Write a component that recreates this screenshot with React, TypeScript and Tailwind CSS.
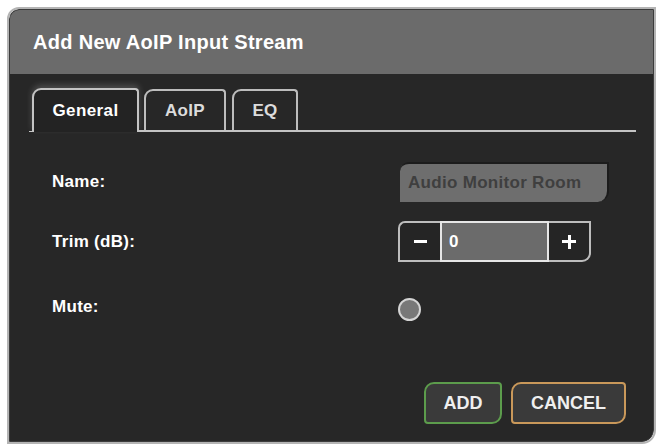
const font = { fontFamily: '"Liberation Sans", Arial, sans-serif' }

const Stepper = () => {
    return (
        <div className="flex h-[41px] w-[193px]">
            <button className="flex w-[42px] items-center justify-center rounded-tl-[7px] border-2 border-r-0 border-[#bdbdbd] bg-[#252525] text-white">
                <span className="block h-[3px] w-[13px] bg-white"></span>
            </button>
            <div className="flex flex-1 items-center border-2 border-[#e6e6e6] bg-[#6b6b6b] pl-[7px] text-[17px] font-bold text-white">0</div>
            <button className="relative flex w-[42px] items-center justify-center rounded-br-[9px] border-2 border-l-0 border-[#bdbdbd] bg-[#252525]">
                <span className="block h-[3px] w-[14px] bg-white"></span>
                <span className="absolute block h-[14px] w-[3px] bg-white"></span>
            </button>
        </div>
    )
}

const App = () => {
    return (
        <div style={font} className="h-[446px] w-[659px] bg-white pl-[7px] pt-[7px]">
            <div className="h-[437px] w-[649px] overflow-hidden rounded-tl-[12px] rounded-br-[14px] border-2 border-[#b4b4b4]">
                <div className="flex h-full flex-col overflow-hidden rounded-tl-[10px] rounded-br-[12px] border border-[#3c3c3c] bg-[#272727]">
                    <div className="flex h-[64px] items-center bg-[#6b6b6b] pl-[23px]">
                        <h1 className="text-[20px] font-bold tracking-[0.3px] text-white">Add New AoIP Input Stream</h1>
                    </div>

                    <div className="ml-[19px] mr-[17px] mt-[14px] flex items-end">
                        <div className="h-[1px] w-[3px] self-end bg-[#c8c8c8]"></div>
                        <div className="flex h-[44px] w-[107px] items-center justify-center rounded-tl-[9px] rounded-tr-[4px] border-2 border-b-0 border-[#c4c4c4] bg-[#232323] text-[17px] font-bold tracking-[0.4px] text-white shadow-[0_-3px_6px_rgba(255,255,255,0.18)]">
                            General
                        </div>
                        <div className="flex flex-1 items-end gap-[6px] border-b-2 border-[#c4c4c4] pl-[5px]">
                            <div className="flex h-[41px] w-[82px] items-center justify-center rounded-tl-[9px] rounded-tr-[4px] border-2 border-b-0 border-[#bdbdbd] text-[17px] font-bold tracking-[0.3px] text-[#dcdcdc]">
                                AoIP
                            </div>
                            <div className="flex h-[41px] w-[66px] items-center justify-center rounded-tl-[9px] rounded-tr-[4px] border-2 border-b-0 border-[#bdbdbd] text-[17px] font-bold tracking-[0.3px] text-[#dcdcdc]">
                                EQ
                            </div>
                        </div>
                    </div>

                    <div className="ml-[42px] mt-[30px] flex flex-col text-[17px] font-bold tracking-[0.3px] text-white">
                        <div className="flex items-center">
                            <label className="w-[348px]">Name:</label>
                            <div className="flex h-[40px] w-[209px] items-center rounded-tl-[9px] rounded-br-[11px] border-r-2 border-t-2 border-[#1c1c1c] bg-[#6e6e6e] pl-[8px] text-[#3f3f3f]">
                                Audio Monitor Room
                            </div>
                        </div>
                        <div className="mt-[19px] flex items-center">
                            <label className="w-[346px]">Trim (dB):</label>
                            <Stepper />
                        </div>
                        <div className="mt-[32px] flex items-center">
                            <label className="mb-[6px] w-[346px]">Mute:</label>
                            <div className="h-[23px] w-[23px] rounded-full border-2 border-[#d4d4d4] bg-[#787878]"></div>
                        </div>
                    </div>

                    <div className="mb-[17px] mr-[27px] mt-auto flex justify-end gap-[9px]">
                        <button className="h-[42px] w-[78px] rounded-[4px] rounded-tl-[10px] rounded-br-[10px] border-2 border-[#5c9c4c] bg-[#3a3a3a] text-[18px] font-bold text-[#efefef]">
                            ADD
                        </button>
                        <button className="h-[42px] w-[115px] rounded-[4px] rounded-tl-[10px] rounded-br-[10px] border-2 border-[#c9985a] bg-[#3a3a3a] text-[18px] font-bold text-[#efefef]">
                            CANCEL
                        </button>
                    </div>
                </div>
            </div>
        </div>
    )
}

export default App
